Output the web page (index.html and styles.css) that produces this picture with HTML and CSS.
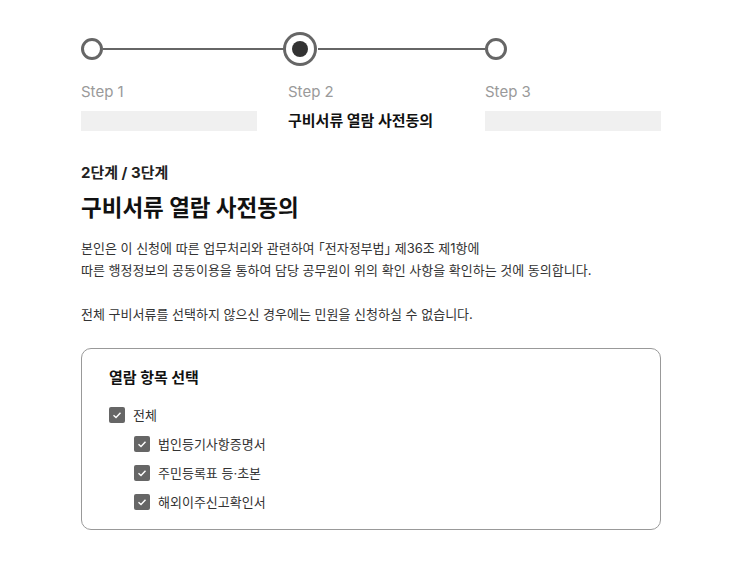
FILE: index.html
```html
<!DOCTYPE html>
<html lang="ko">

<head>
    <meta charset="UTF-8">
    <meta name="viewport" content="width=device-width, initial-scale=1.0">
    <title>구비서류 열람 사전동의</title>
    <link rel="stylesheet" href="styles.css">
</head>

<body>
    <div class="container">
        <div class="stepper">
            <div class="step">
                <div class="marker">
                    <span class="dot"></span>
                    <span class="line"></span>
                </div>
                <div class="step-label">Step 1</div>
                <div class="step-bar"></div>
            </div>
            <div class="step active">
                <div class="marker">
                    <span class="dot"><span class="dot-inner"></span></span>
                    <span class="line"></span>
                </div>
                <div class="step-label">Step 2</div>
                <div class="step-title">구비서류 열람 사전동의</div>
            </div>
            <div class="step">
                <div class="marker">
                    <span class="dot"></span>
                </div>
                <div class="step-label">Step 3</div>
                <div class="step-bar full"></div>
            </div>
        </div>

        <div class="progress">2단계 / 3단계</div>
        <h1>구비서류 열람 사전동의</h1>

        <p class="desc">
            본인은 이 신청에 따른 업무처리와 관련하여 <span class="quote">「전자정부법」</span> 제36조 제1항에<br>
            따른 행정정보의 공동이용을 통하여 담당 공무원이 위의 확인 사항을 확인하는 것에 동의합니다.
        </p>
        <p class="desc">전체 구비서류를 선택하지 않으신 경우에는 민원을 신청하실 수 없습니다.</p>

        <div class="select-box">
            <h2>열람 항목 선택</h2>
            <ul class="check-list">
                <li>
                    <span class="checkbox"><svg viewBox="0 0 16 16"><polyline points="4.5,8.3 7,10.6 11.5,5.8" /></svg></span>
                    전체
                </li>
                <li class="sub">
                    <span class="checkbox"><svg viewBox="0 0 16 16"><polyline points="4.5,8.3 7,10.6 11.5,5.8" /></svg></span>
                    법인등기사항증명서
                </li>
                <li class="sub">
                    <span class="checkbox"><svg viewBox="0 0 16 16"><polyline points="4.5,8.3 7,10.6 11.5,5.8" /></svg></span>
                    주민등록표 등·초본
                </li>
                <li class="sub">
                    <span class="checkbox"><svg viewBox="0 0 16 16"><polyline points="4.5,8.3 7,10.6 11.5,5.8" /></svg></span>
                    해외이주신고확인서
                </li>
            </ul>
        </div>
    </div>
</body>

</html>
```

FILE: styles.css
```css
body {
    font-family: "Inter", "Noto Sans CJK KR", sans-serif;
    background-color: #fff;
    color: #222;
    margin: 0;
}

.container {
    padding: 32px 81px 0;
}

/* stepper */
.stepper {
    display: grid;
    grid-template-columns: 207px 197px 1fr;
}

.marker {
    display: flex;
    align-items: center;
    height: 34px;
}

.dot {
    flex: none;
    width: 22px;
    height: 22px;
    box-sizing: border-box;
    border: 3px solid #666;
    border-radius: 50%;
    background: #fff;
}

.line {
    flex: 1;
    height: 2px;
    background: #666;
}

.step.active .dot {
    border: none;
    background: none;
    display: flex;
    align-items: center;
    justify-content: center;
    margin-left: 1px;
}

.dot-inner {
    width: 16px;
    height: 16px;
    border-radius: 50%;
    background: #333;
    box-shadow: 0 0 0 6px #fff, 0 0 0 9px #666;
}

.step.active .line {
    margin-left: 7px;
}

.step-label {
    margin-top: 16px;
    font-size: 15px;
    line-height: 20px;
    color: #9a9a9a;
}

.step-bar {
    margin-top: 9px;
    width: 176px;
    height: 20px;
    background: #f0f0f0;
}

.step-title {
    margin-top: 9px;
    font-size: 15px;
    line-height: 20px;
    font-weight: 700;
    color: #111;
}

/* heading */
.progress {
    margin-top: 32px;
    font-size: 15px;
    line-height: 20px;
    font-weight: 700;
    color: #222;
}

h1 {
    margin: 10px 0 0;
    font-size: 22.5px;
    line-height: 30px;
    font-weight: 700;
    color: #111;
}

.desc {
    margin: 14px 0 0;
    font-size: 13px;
    line-height: 22px;
    color: #333;
}

.desc + .desc {
    margin-top: 22px;
}

.quote {
    font-feature-settings: "halt";
}

/* selection box */
.select-box {
    margin-top: 23px;
    border: 1px solid #999;
    border-radius: 10px;
    padding: 19px 27px 13px;
}

.select-box h2 {
    margin: 0;
    font-size: 15px;
    line-height: 20px;
    font-weight: 700;
    color: #111;
}

.check-list {
    list-style: none;
    margin: 12px 0 0;
    padding: 0;
}

.check-list li {
    display: flex;
    align-items: center;
    gap: 8px;
    height: 29px;
    font-size: 13px;
    color: #333;
}

.check-list li.sub {
    padding-left: 25px;
}

.checkbox {
    width: 16px;
    height: 16px;
    border-radius: 2px;
    background: #666;
}

.checkbox svg {
    display: block;
    width: 16px;
    height: 16px;
    fill: none;
    stroke: #fff;
    stroke-width: 1.4;
}
```
